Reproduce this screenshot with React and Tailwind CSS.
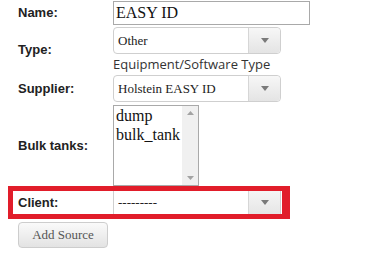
import React from "react";

const Arrow = () => (
  <svg width="8" height="5" viewBox="0 0 8 5">
    <path d="M0 0 L8 0 L4 5 Z" fill="#7a7a7a" />
  </svg>
);

const Select = ({ value, className = "" }) => (
  <div
    className={`flex w-[168px] rounded-[4px] border border-[#cfcfcf] bg-white ${className}`}
  >
    <div className="flex flex-1 items-center pl-[4px] font-['Liberation_Serif',serif] text-[13px] text-[#222]">
      {value}
    </div>
    <div className="flex w-[32px] items-center justify-center rounded-r-[4px] border-l border-[#d6d6d6] bg-gradient-to-b from-[#f7f7f7] to-[#e4e4e4]">
      <Arrow />
    </div>
  </div>
);

const Label = ({ children }) => (
  <div className="w-[113px] shrink-0 pl-[18px] font-['Liberation_Sans',Arial,sans-serif] text-[13px] font-bold text-[#222]">
    {children}
  </div>
);

export default function App() {
  return (
    <div className="h-[265px] w-[379px] overflow-hidden bg-white">
      <div className="flex flex-col">
        <div className="mt-[1px] flex items-center">
          <Label>Name:</Label>
          <div className="flex h-[24px] w-[197px] items-center border border-[#a9a9a9] pl-[2px] font-['Liberation_Serif',serif] text-[16px] text-[#111]">
            EASY ID
          </div>
        </div>

        <div className="mt-[2px] flex items-center">
          <Label>Type:</Label>
          <div className="flex flex-col">
            <Select value="Other" className="h-[27px]" />
            <div className="mt-[1px] font-['Open_Sans',sans-serif] text-[13px] leading-[18px] text-[#333]">
              Equipment/Software Type
            </div>
          </div>
        </div>

        <div className="mt-[2px] flex items-center">
          <Label>Supplier:</Label>
          <Select value="Holstein EASY ID" className="h-[27px]" />
        </div>

        <div className="mt-[3px] flex items-center">
          <Label>Bulk tanks:</Label>
          <div className="flex h-[81px] w-[86px] border border-[#a9a9a9] bg-white">
            <div className="flex-1 pl-[2px] font-['Liberation_Serif',serif] text-[16px] leading-[19px] text-[#111]">
              <div>dump</div>
              <div>bulk_tank</div>
            </div>
            <div className="flex w-[16px] flex-col items-center justify-between bg-[#f0f0f0] py-[5px]">
              <svg width="7" height="4" viewBox="0 0 7 4">
                <path d="M0 4 L7 4 L3.5 0 Z" fill="#a3a3a3" />
              </svg>
              <svg width="7" height="4" viewBox="0 0 7 4">
                <path d="M0 0 L7 0 L3.5 4 Z" fill="#a3a3a3" />
              </svg>
            </div>
          </div>
        </div>

        <div className="relative mt-[1px] flex h-[31px] items-center">
          <Label>Client:</Label>
          <Select value="---------" className="h-[31px]" />
          <div className="pointer-events-none absolute left-[8px] top-[-1px] h-[33px] w-[282px] border-[5px] border-r-[8px] border-[#e11d2a]" />
        </div>

        <div className="mt-[3px] pl-[18px]">
          <button className="h-[26px] w-[90px] rounded-[4px] border border-[#cdcdcd] bg-gradient-to-b from-[#fafafa] to-[#e3e3e3] font-['Liberation_Serif',serif] text-[13px] text-[#555]">
            Add Source
          </button>
        </div>
      </div>
    </div>
  );
}
